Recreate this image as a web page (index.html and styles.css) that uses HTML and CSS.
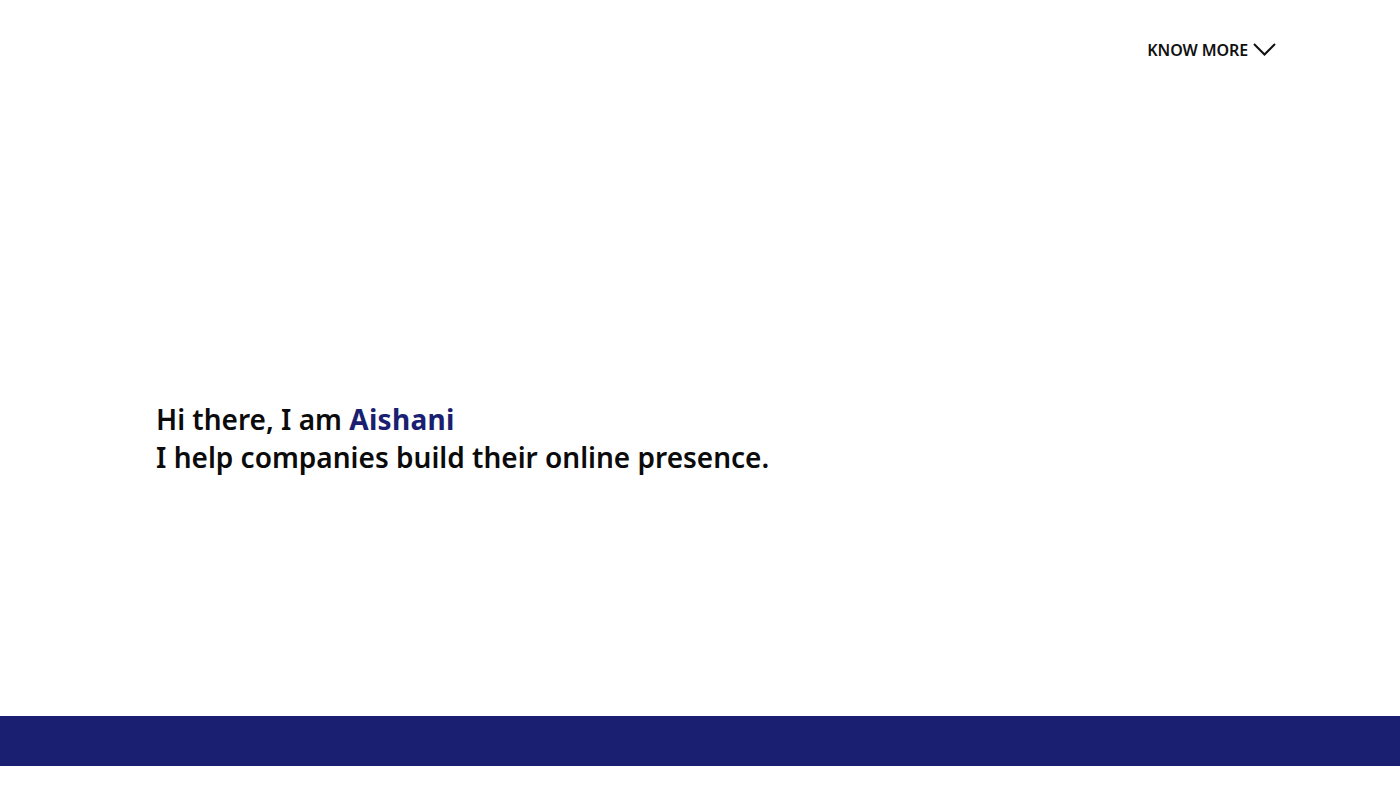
FILE: index.html
```html
<!DOCTYPE html>
<html>
<head>
<meta charset="utf-8">
<link rel="stylesheet" href="styles.css">
</head>
<body>
<div class="page">
  <header class="top">
    <a class="know">KNOW MORE
      <svg class="chev" width="23" height="13" viewBox="0 0 23 13"><path d="M1 1 L11.5 11.5 L22 1" fill="none" stroke="#111" stroke-width="2"/></svg>
    </a>
  </header>
  <main class="hero">
    <h1 class="intro">Hi there, I am <span class="name">Aishani</span><br>I help companies build their online presence.</h1>
  </main>
  <div class="band"></div>
</div>
</body>
</html>
```
FILE: styles.css
```css
html, body { margin: 0; padding: 0; background: #fff; }
body { font-family: "Noto Sans", "Open Sans", sans-serif; color: #0b0b0b; }
.page { width: 1400px; height: 800px; display: flex; flex-direction: column; }
.top { height: 100px; display: flex; justify-content: flex-end; align-items: flex-start; padding-right: 124px; box-sizing: border-box; }
.know { margin-top: 39px; display: flex; align-items: center; gap: 5px; font-size: 16px; font-weight: 600; color: #111; letter-spacing: -0.1px; }
.chev { display: block; margin-top: -2px; }
.hero { flex: 1; display: flex; align-items: center; padding-left: 156px; }
.intro { margin: 0; font-size: 28px; font-weight: 600; line-height: 38px; margin-top: 60px; }
.name { color: #1a1f71; font-weight: 700; letter-spacing: 0.3px; }
.band { height: 50px; background: #1a1f71; margin-bottom: 34px; }
```
